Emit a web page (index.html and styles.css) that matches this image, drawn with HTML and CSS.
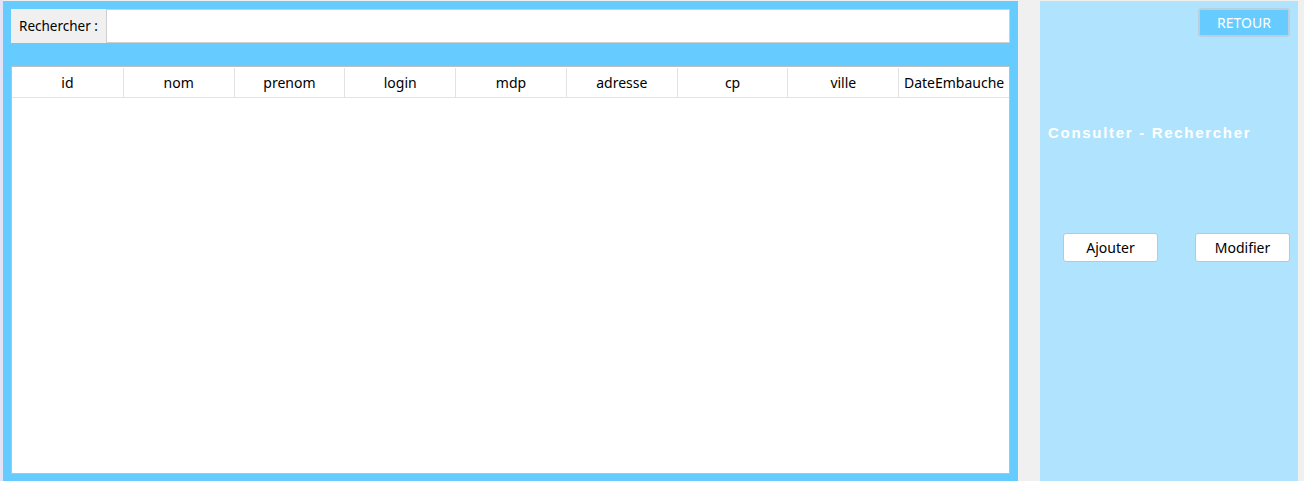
FILE: index.html
```html
<!DOCTYPE html>
<html lang="fr">
<head>
<meta charset="utf-8">
<title>Consulter - Rechercher</title>
<link rel="stylesheet" href="styles.css">
</head>
<body>
<div class="app">
  <div class="edge"></div>
  <main class="main">
    <div class="search">
      <label class="search-label" for="q">Rechercher :</label>
      <input class="search-input" id="q" type="text">
    </div>
    <div class="table">
      <div class="thead">
        <div class="th">id</div>
        <div class="th">nom</div>
        <div class="th">prenom</div>
        <div class="th">login</div>
        <div class="th">mdp</div>
        <div class="th">adresse</div>
        <div class="th">cp</div>
        <div class="th">ville</div>
        <div class="th">DateEmbauche</div>
      </div>
    </div>
  </main>
  <aside class="side">
    <div class="side-top"><button class="btn-retour">RETOUR</button></div>
    <h1 class="title">Consulter - Rechercher</h1>
    <div class="actions">
      <button class="btn">Ajouter</button>
      <button class="btn">Modifier</button>
    </div>
  </aside>
</div>
</body>
</html>
```
FILE: styles.css
```css
* { box-sizing: border-box; }
html, body { margin: 0; padding: 0; }
body {
  background: #f0f0f0;
  font-family: "Noto Sans", "Open Sans", sans-serif;
  font-size: 14px;
  color: #000;
  overflow: hidden;
}
.app {
  display: flex;
  height: 481px;
  width: 1304px;
}
.edge {
  width: 3px;
  background: #e3e3f7;
}
.main {
  width: 1015px;
  margin-top: 1px;
  background: #66ccff;
  padding: 8px 8px 7px 8px;
  display: flex;
  flex-direction: column;
}
.search {
  display: flex;
  height: 34px;
}
.search-label {
  width: 95px;
  background: #f0f0f0;
  display: flex;
  align-items: center;
  padding-left: 8px;
  font-size: 13.5px;
}
.search-input {
  flex: 1;
  margin: 0;
  border: 1px solid #cfcfcf;
  background: #fff;
  outline: none;
}
.table {
  margin-top: 23px;
  flex: 1;
  background: #fff;
  border: 1px solid #c0c0c0;
}
.thead {
  display: grid;
  grid-template-columns: repeat(9, 1fr);
  height: 31px;
  border-bottom: 1px solid #e3e3e3;
  padding-top: 1px;
}
.th {
  display: flex;
  align-items: center;
  justify-content: center;
  border-left: 1px solid #e3e3e3;
  font-size: 14px;
  white-space: nowrap;
}
.th:first-child { border-left: none; }
.side {
  width: 258px;
  margin-left: 22px;
  margin-top: 1px;
  background: #b0e4fe;
  display: flex;
  flex-direction: column;
  padding: 7px 8px 0 8px;
}
.side-top {
  display: flex;
  justify-content: flex-end;
}
.btn-retour {
  width: 92px;
  height: 29px;
  background: #66ccff;
  border: 2px solid #b9cfe0;
  border-radius: 3px;
  color: #fff;
  font-family: "Noto Sans", "Open Sans", sans-serif;
  font-size: 14px;
  padding: 0;
}
.title {
  margin: 87px 0 0 0;
  color: #fff;
  font-family: "Liberation Sans", Arial, sans-serif;
  font-weight: bold;
  font-size: 15px;
  letter-spacing: 1.7px;
  line-height: 17px;
  white-space: nowrap;
}
.actions {
  display: flex;
  justify-content: space-between;
  margin-top: 92px;
  padding-left: 15px;
}
.btn {
  width: 95px;
  height: 29px;
  background: #fff;
  border: 1px solid #c4c4c4;
  border-radius: 3px;
  font-family: "Noto Sans", "Open Sans", sans-serif;
  font-size: 14px;
  color: #000;
  padding: 0;
}
```
